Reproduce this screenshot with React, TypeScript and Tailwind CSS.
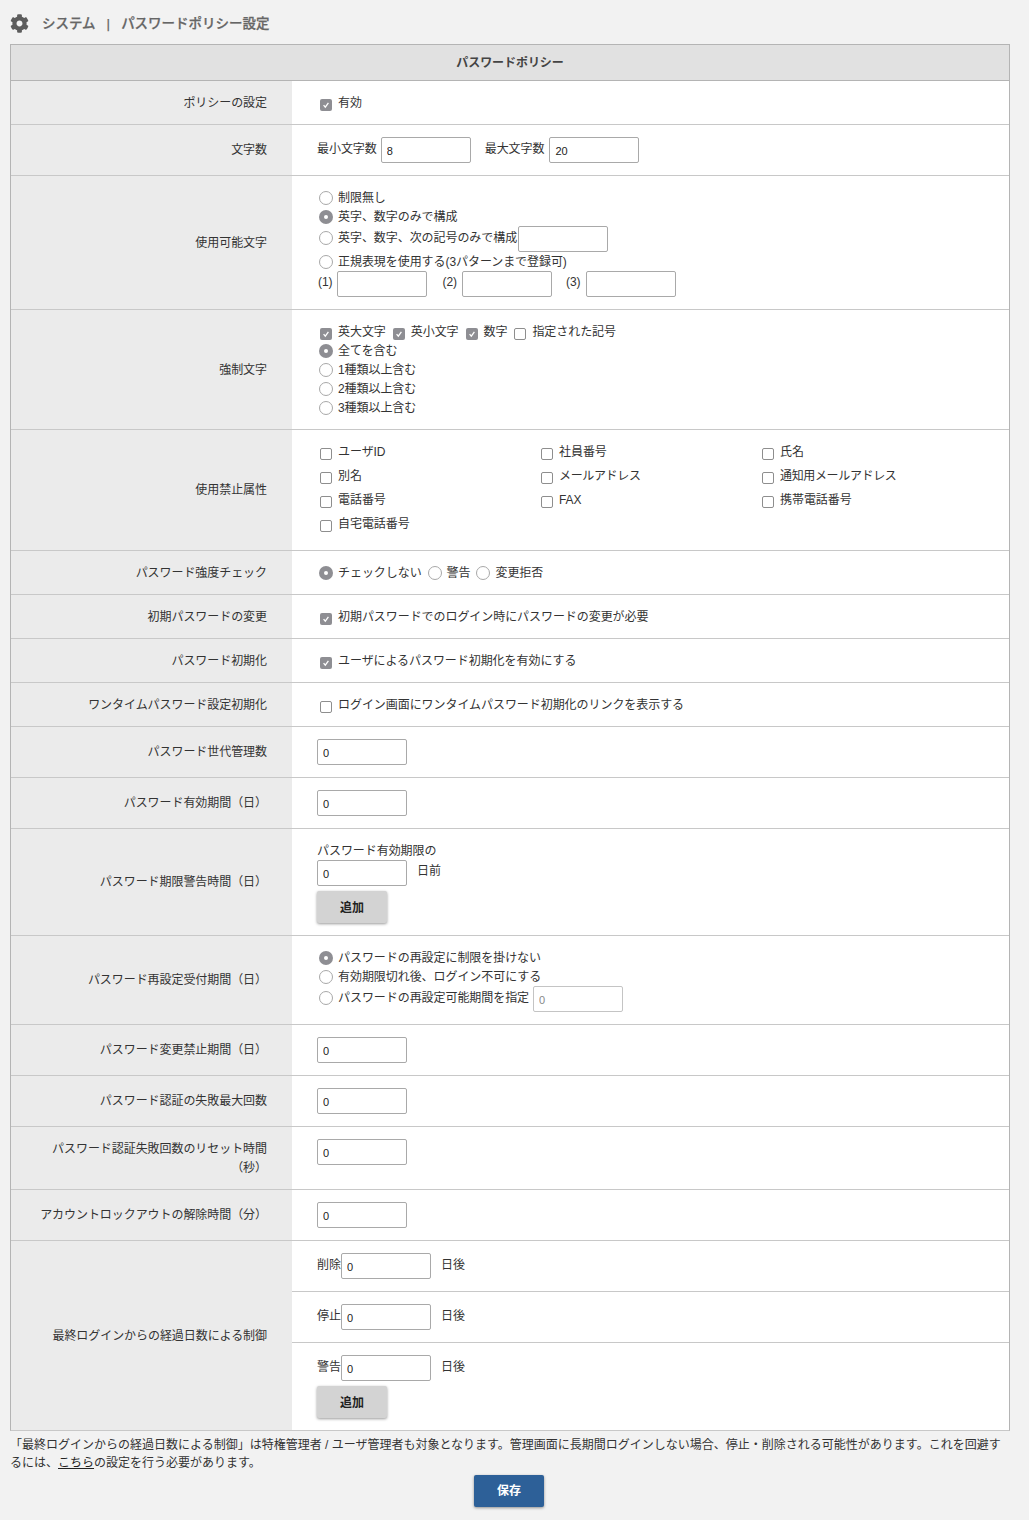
import React from "react";
import { FaCog } from "react-icons/fa";

const Box = ({ on = false }: { on?: boolean }) => (
  <span className={`inline-flex shrink-0 w-[12px] h-[12px] rounded-[2px] items-center justify-center ${on ? "bg-[#8e8e93]" : "bg-white border border-[#8e8e8e]"}`}>
    {on && (
      <svg width="10" height="10" viewBox="0 0 10 10" fill="none">
        <path d="M2.6 5.2 L4.3 7.2 L7.4 2.9" stroke="#fff" strokeWidth="1.3" />
      </svg>
    )}
  </span>
);

const Radio = ({ on = false }: { on?: boolean }) => (
  <span className={`inline-flex shrink-0 w-[14px] h-[14px] rounded-full items-center justify-center ${on ? "bg-[#8e8e93]" : "bg-white border border-[#a8a8a8]"}`}>
    {on && <span className="w-[4px] h-[4px] rounded-full bg-white" />}
  </span>
);

const Check = ({ on, label, className = "", tight = false, grid = false }: { on?: boolean; label: string; className?: string; tight?: boolean; grid?: boolean }) => (
  <span className={`inline-flex items-center ${className}`}>
    <span className={`ml-[3px] flex ${grid ? "mt-[4px]" : "mt-[5px]"}`}><Box on={on} /></span>
    <span className={`ml-[6px] ${tight ? "tracking-[-0.35px]" : ""}`}>{label}</span>
  </span>
);

const RadioLabel = ({ on, label }: { on?: boolean; label: string }) => (
  <span className="inline-flex items-center">
    <span className="ml-[2px] mt-[1px] flex"><Radio on={on} /></span>
    <span className="ml-[5px]">{label}</span>
  </span>
);

const Input = ({ v = "", w = "mt-[3px]", dim = false }: { v?: string; w?: string; dim?: boolean }) => (
  <input
    readOnly
    value={v}
    className={`w-[90px] h-[26px] bg-white border rounded-[2px] pl-[5px] pt-[2px] text-[11px] outline-none ${dim ? "border-[#c4c4c4] text-[#888]" : "border-[#a9a9a9] text-[#222]"} ${w}`}
  />
);

const Row = ({ label, h, children, className = "" }: { label: React.ReactNode; h: string; children: React.ReactNode; className?: string }) => (
  <div className={`flex border-b border-[#c8c8c8] ${h}`}>
    <div className="w-[281px] shrink-0 bg-[#ebebeb] flex items-center justify-end pr-[25px] text-right">{label}</div>
    <div className={`flex-1 bg-white pl-[25px] ${className}`}>{children}</div>
  </div>
);

const Btn = () => (
  <div className="w-[70px] h-[32px] pt-[1px] rounded-[2px] bg-[#d3d3d3] flex items-center justify-center font-bold text-[#222] shadow-[0_1px_3px_rgba(0,0,0,0.4)]">追加</div>
);

const InputRow = ({ label, h = "h-[51px]" }: { label: React.ReactNode; h?: string }) => (
  <Row label={label} h={h} className="flex items-center">
    <Input v="0" w="" />
  </Row>
);

const Line = ({ h, children, className = "" }: { h: string; children: React.ReactNode; className?: string }) => (
  <div className={`flex items-center ${h} ${className}`}>{children}</div>
);

const Sub = ({ label, cls, children }: { label: string; cls: string; children?: React.ReactNode }) => (
  <div className={`pl-[25px] ${cls}`}>
    <div className="flex items-start pt-[12px]">
      <span className="mt-[3px] w-[24px]">{label}</span>
      <Input v="0" w="" />
      <span className="ml-[10px] mt-[3px]">日後</span>
    </div>
    {children}
  </div>
);

export default function App() {
  return (
    <div className="min-h-[1520px] bg-[#f2f2f2] text-[12px] leading-[18px] text-[#333] tracking-[-0.06px] font-['Liberation_Sans','Noto_Sans_CJK_JP',sans-serif]">
      <div className="h-[44px] flex items-center pl-[10px] pt-[2px]">
        <FaCog size={19} color="#5c5c5c" />
        <span className="ml-[13px] mt-[1px] text-[13.5px] tracking-normal text-[#666] font-medium [-webkit-text-stroke:0.25px_#666]">
          システム<span className="mx-[11px]">|</span>パスワードポリシー設定
        </span>
      </div>

      <div className="mx-[10px] w-[1000px] border border-[#b4b4b4] border-b-[#c8c8c8]">
        <div className="h-[36px] bg-[#e1e1e1] border-b border-[#b4b4b4] flex items-center justify-center font-bold text-[#444]">パスワードポリシー</div>

        <Row label="ポリシーの設定" h="h-[44px]" className="flex items-center">
          <Check on label="有効" />
        </Row>

        <Row label="文字数" h="h-[51px]" className="flex items-center">
          <span className="-mt-[2px]">最小文字数</span>
          <Input v="8" w="ml-[4px]" />
          <span className="ml-[14px] -mt-[2px]">最大文字数</span>
          <Input v="20" w="ml-[5px]" />
        </Row>

        <Row label="使用可能文字" h="h-[134px]" className="pt-[12px]">
          <Line h="h-[19px]"><RadioLabel label="制限無し" /></Line>
          <Line h="h-[19px]"><RadioLabel on label="英字、数字のみで構成" /></Line>
          <Line h="h-[23px]">
            <RadioLabel label="英字、数字、次の記号のみで構成" />
            <Input w="mt-[3px] ml-[1px]" />
          </Line>
          <Line h="h-[25px]"><RadioLabel label="正規表現を使用する(3パターンまで登録可)" /></Line>
          <Line h="h-[17px]">
            <span className="ml-[1px] -mt-[1px]">(1)</span>
            <Input w="ml-[4px] mt-[2px]" />
            <span className="ml-[16px] -mt-[1px]">(2)</span>
            <Input w="ml-[5px] mt-[2px]" />
            <span className="ml-[14px] -mt-[1px]">(3)</span>
            <Input w="ml-[5px] mt-[2px]" />
          </Line>
        </Row>

        <Row label="強制文字" h="h-[120px]" className="pt-[12px]">
          <Line h="h-[19px]">
            <Check on label="英大文字" />
            <Check on label="英小文字" className="ml-[4px]" />
            <Check on label="数字" className="ml-[4px]" />
            <Check label="指定された記号" className="ml-[4px]" />
          </Line>
          <Line h="h-[19px]"><RadioLabel on label="全てを含む" /></Line>
          <Line h="h-[19px]"><RadioLabel label="1種類以上含む" /></Line>
          <Line h="h-[19px]"><RadioLabel label="2種類以上含む" /></Line>
          <Line h="h-[19px]"><RadioLabel label="3種類以上含む" /></Line>
        </Row>

        <Row label="使用禁止属性" h="h-[121px]" className="pt-[10px]">
          <div className="grid grid-cols-[221px_221px_221px] auto-rows-[24px]">
            {["ユーザID", "社員番号", "氏名", "別名", "メールアドレス", "通知用メールアドレス", "電話番号", "FAX", "携帯電話番号", "自宅電話番号"].map((t) => (
              <Check key={t} label={t} grid tight={t.includes("メール")} />
            ))}
          </div>
        </Row>

        <Row label="パスワード強度チェック" h="h-[44px]" className="flex items-center">
          <RadioLabel on label="チェックしない" />
          <span className="ml-[4px] flex"><RadioLabel label="警告" /></span>
          <span className="ml-[4px] flex"><RadioLabel label="変更拒否" /></span>
        </Row>
        <Row label="初期パスワードの変更" h="h-[44px]" className="flex items-center">
          <Check on label="初期パスワードでのログイン時にパスワードの変更が必要" />
        </Row>
        <Row label="パスワード初期化" h="h-[44px]" className="flex items-center">
          <Check on label="ユーザによるパスワード初期化を有効にする" />
        </Row>
        <Row label="ワンタイムパスワード設定初期化" h="h-[44px]" className="flex items-center">
          <Check label="ログイン画面にワンタイムパスワード初期化のリンクを表示する" />
        </Row>

        <InputRow label="パスワード世代管理数" />
        <InputRow label="パスワード有効期間（日）" />

        <Row label="パスワード期限警告時間（日）" h="h-[107px]" className="pt-[13px]">
          <div className="h-[18px]">パスワード有効期限の</div>
          <div className="flex items-start">
            <Input v="0" w="" />
            <span className="ml-[10px] mt-[2px]">日前</span>
          </div>
          <div className="mt-[5px]"><Btn /></div>
        </Row>

        <Row label="パスワード再設定受付期間（日）" h="h-[89px]" className="pt-[12px]">
          <Line h="h-[19px]"><RadioLabel on label="パスワードの再設定に制限を掛けない" /></Line>
          <Line h="h-[19px]"><RadioLabel label="有効期限切れ後、ログイン不可にする" /></Line>
          <Line h="h-[23px]">
            <RadioLabel label="パスワードの再設定可能期間を指定" />
            <Input v="0" w="ml-[4px] mt-[3px]" dim />
          </Line>
        </Row>

        <InputRow label="パスワード変更禁止期間（日）" />
        <InputRow label="パスワード認証の失敗最大回数" />
        <Row
          label={<span className="block pt-[1px] leading-[19px]">パスワード認証失敗回数のリセット時間<br />（秒）</span>}
          h="h-[63px]"
          className="pt-[12px]"
        >
          <Input v="0" w="" />
        </Row>
        <InputRow label="アカウントロックアウトの解除時間（分）" />

        <div className="flex h-[189px]">
          <div className="w-[281px] shrink-0 bg-[#ebebeb] flex items-center justify-end pr-[25px]">最終ログインからの経過日数による制御</div>
          <div className="flex-1 bg-white">
            <Sub label="削除" cls="h-[51px] border-b border-[#c8c8c8]" />
            <Sub label="停止" cls="h-[51px] border-b border-[#c8c8c8]" />
            <Sub label="警告" cls="h-[87px]">
              <div className="mt-[5px]"><Btn /></div>
            </Sub>
          </div>
        </div>
      </div>

      <div className="mx-[10px] w-[1000px] mt-[5px] tracking-normal text-[#333]">
        「最終ログインからの経過日数による制御」は特権管理者 / ユーザ管理者も対象となります。管理画面に長期間ログインしない場合、停止・削除される可能性があります。これを回避するには、<span className="underline text-[#222]">こちら</span>の設定を行う必要があります。
      </div>
      <div className="flex justify-center mt-[3px]">
        <div className="w-[70px] h-[32px] ml-[-11px] rounded-[2px] bg-[#2d6098] text-white font-bold flex items-center justify-center shadow-[0_1px_3px_rgba(0,0,0,0.4)]">保存</div>
      </div>
    </div>
  );
}
